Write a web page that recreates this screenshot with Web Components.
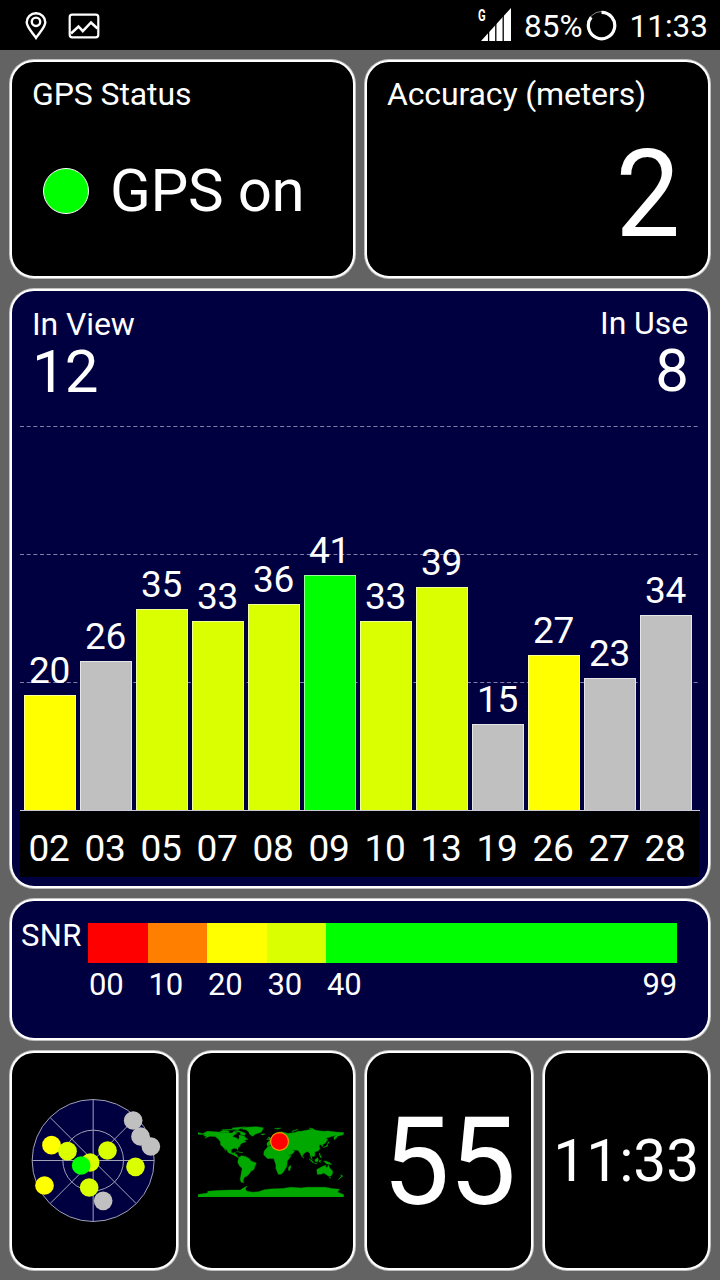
<!DOCTYPE html>
<html lang="en">
<head>
<meta charset="utf-8">
<title>GPS Test</title>
<style>
  html, body {
    margin: 0;
    background: #636363;
  }

  body {
    width: 720px;
    height: 1280px;
    overflow: hidden;
    color: #fff;
    font-family: Roboto, "Liberation Sans", sans-serif;
  }
</style>
</head>
<body>
<gps-app></gps-app>

<script>
const define = (name, html, setup) => {
  const template = document.createElement("template");
  template.innerHTML = html;

  customElements.define(name, class extends HTMLElement {
    constructor() {
      super();
      this.attachShadow({ mode: "open" }).append(template.content.cloneNode(true));
    }

    connectedCallback() {
      setup?.(this, this.shadowRoot);
    }
  });
};

const COLORS = {
  none: "#c0c0c0",
  yellow: "#ffff00",
  lime: "#d9ff00",
  green: "#00ff00",
};

const SATELLITES = [
  ["02", 20, "yellow"],
  ["03", 26, "none"],
  ["05", 35, "lime"],
  ["07", 33, "lime"],
  ["08", 36, "lime"],
  ["09", 41, "green"],
  ["10", 33, "lime"],
  ["13", 39, "lime"],
  ["19", 15, "none"],
  ["26", 27, "yellow"],
  ["27", 23, "none"],
  ["28", 34, "none"],
];

define("status-bar", `
  <style>
    :host {
      height: 50px;
      padding: 2px 12px 0 24px;
      box-sizing: border-box;
      display: flex;
      align-items: center;
      background: #000;
      font-size: 31.5px;
      line-height: 48px;
    }

    svg {
      display: block;
      fill: none;
      stroke: #fff;
    }

    .text {
      padding-top: 1px;
    }

    .pin {
      margin-right: 20px;
    }

    .signal {
      margin: 0 13px 4px auto;
      display: flex;
      align-items: flex-start;
    }

    .signal span {
      width: 8px;
      margin-right: -5px;
      font: bold 16px/16px Roboto, sans-serif;
      transform: scaleX(0.7);
      transform-origin: left;
    }

    .battery {
      margin: 0 13px 2px 3px;
    }
  </style>
  <svg class="pin" width="24" height="28" viewBox="0 0 24 28" stroke-width="2.4">
    <path d="M12 25.8C9 21 2.7 15.5 2.7 10.3a9.3 9 0 0 1 18.6 0C21.3 15.5 15 21 12 25.8Z"/>
    <circle cx="12" cy="9.8" r="4.2"/>
  </svg>
  <svg width="32" height="26" viewBox="0 0 32 26" stroke-width="2.2">
    <rect x="1.7" y="1.7" width="28.6" height="22.6" rx="2.5"/>
    <path d="M3 20.5L10.5 13.5L14.8 18.2L23 9.5L29.5 15.5" stroke-width="2.5"/>
  </svg>
  <div class="signal">
    <span>G</span>
    <svg width="30" height="33" viewBox="0 0 30 33">
      <path d="M0 33L30 0V33Z" fill="#fff" stroke="none"/>
      <path d="M7.6 0V33M14.8 0V33M22.2 0V33" stroke="#000" stroke-width="1.3"/>
    </svg>
  </div>
  <span class="text">85%</span>
  <svg class="battery" width="31" height="31" viewBox="0 0 31 31">
    <circle cx="15.5" cy="15.5" r="14" stroke="#888"/>
    <path d="M15.5 2.3A13.2 13.2 0 1 1 5.2 7.3" stroke-width="3.2"/>
  </svg>
  <span class="text">11:33</span>
`);

define("info-card", `
  <style>
    :host {
      display: flex;
      flex-direction: column;
      box-sizing: border-box;
      min-width: 0;
      border: 2px solid #fff;
      border-radius: 24px;
      background: #000;
      box-shadow: 0 0 0 1px rgba(255, 255, 255, 0.6);
    }

    :host([navy]) {
      background: #000040;
    }

    :host([center]) {
      align-items: center;
      justify-content: center;
    }
  </style>
  <slot></slot>
`);

define("gps-status", `
  <style>
    :host {
      display: block;
      padding: 12px 20px 0;
      font-size: 32px;
      line-height: 40px;
      letter-spacing: -0.1px;
    }

    .state {
      margin-top: 39px;
      padding-left: 11px;
      display: flex;
      align-items: center;
      gap: 21px;
      font-size: 60px;
      line-height: 76px;
      letter-spacing: -0.4px;
    }

    .state i {
      width: 44px;
      height: 44px;
      border: 1px solid #fff;
      border-radius: 50%;
      background: #0f0;
    }
  </style>
  <slot name="title"></slot>
  <div class="state"><i></i><slot></slot></div>
`);

define("gps-accuracy", `
  <style>
    :host {
      display: block;
      padding: 12px 28px 0 20px;
      font-size: 32px;
      line-height: 40px;
      letter-spacing: -0.14px;
    }

    .value {
      margin-top: 20px;
      font-size: 122.5px;
      line-height: 120px;
      text-align: right;
      transform: scaleX(0.94);
      transform-origin: right;
    }
  </style>
  <slot name="title"></slot>
  <div class="value"><slot></slot></div>
`);

define("sat-bar", `
  <style>
    :host {
      width: 52px;
      text-align: center;
      font-size: 37px;
      line-height: 44px;
    }

    .label {
      margin: 0 1px 2px 0;
      letter-spacing: -0.3px;
    }

    .bar {
      box-sizing: border-box;
      border: 1px solid rgba(255, 255, 255, 0.6);
      border-bottom: 0;
    }
  </style>
  <div class="label"></div>
  <div class="bar"></div>
`, (host, root) => {
  const bar = root.querySelector(".bar");
  root.querySelector(".label").textContent = host.getAttribute("snr");
  bar.style.height = Math.round(host.getAttribute("snr") * 5.73) + "px";
  bar.style.background = COLORS[host.getAttribute("color")];
});

define("sat-chart", `
  <style>
    :host {
      flex: 1;
      padding: 13px 8px 9px;
      display: flex;
      flex-direction: column;
      font-size: 32px;
      line-height: 40px;
      letter-spacing: -0.1px;
    }

    .counts {
      padding: 0 12px;
      display: flex;
      justify-content: space-between;
    }

    .counts div:last-child {
      margin-top: -1px;
      text-align: right;
    }

    .counts b {
      display: block;
      font-weight: normal;
      font-size: 60px;
      line-height: 56px;
      letter-spacing: -1px;
    }

    .plot {
      flex: 1;
      position: relative;
      padding: 0 4px;
      display: flex;
      align-items: flex-end;
      gap: 4px;
      border-bottom: 1px solid #c8c8d8;
    }

    .lines {
      position: absolute;
      left: 0;
      bottom: 0;
      stroke: #7e7eaa;
      stroke-dasharray: 4 2.67;
    }

    sat-bar {
      position: relative;
    }

    .ids {
      height: 66px;
      margin-right: 1px;
      padding: 0 5px 0 3px;
      display: flex;
      gap: 4px;
      background: #000;
      font-size: 37px;
      line-height: 76px;
      letter-spacing: -0.3px;
      text-align: center;
    }

    .ids span {
      width: 52px;
    }
  </style>
  <div class="counts">
    <div>In View<b>12</b></div>
    <div>In Use<b>8</b></div>
  </div>
  <div class="plot">
    <svg class="lines" width="678" height="386">
      <path d="M0 2.5H678M0 130.5H678M0 258.5H678"/>
    </svg>
  </div>
  <div class="ids"></div>
`, (host, root) => {
  const plot = root.querySelector(".plot");
  const ids = root.querySelector(".ids");

  SATELLITES.forEach(([id, snr, color]) => {
    const bar = document.createElement("sat-bar");
    bar.setAttribute("snr", snr);
    bar.setAttribute("color", color);
    plot.append(bar);

    const label = document.createElement("span");
    label.textContent = id;
    ids.append(label);
  });
});

define("snr-legend", `
  <style>
    :host {
      padding: 22px 31px 0 9px;
      display: flex;
      font-size: 31px;
      line-height: 44px;
    }

    .name {
      width: 67px;
      margin-top: -9px;
      letter-spacing: 0.4px;
    }

    .scale {
      flex: 1;
      display: grid;
      grid-template-columns: repeat(4, 59.5px) 1fr;
      grid-template-rows: 40px 44px;
    }

    .scale > span {
      padding-left: 1px;
      letter-spacing: -0.2px;
    }

    .end {
      display: flex;
      justify-content: space-between;
    }
  </style>
  <div class="name">SNR</div>
  <div class="scale">
    <i style="background: #ff0000"></i>
    <i style="background: #ff8000"></i>
    <i style="background: #ffff00"></i>
    <i style="background: #d9ff00"></i>
    <i style="background: #00ff00"></i>
    <span>00</span>
    <span>10</span>
    <span>20</span>
    <span>30</span>
    <span class="end"><span>40</span><span>99</span></span>
  </div>
`);

define("sky-radar", `
  <style>
    :host, svg {
      display: block;
    }
  </style>
  <svg width="140" height="140" viewBox="42.5 32.5 420 420">
    <g fill="#000040" stroke="#a0a0b8" stroke-width="3">
      <circle cx="250" cy="241" r="183"/>
      <circle cx="250" cy="241" r="91"/>
      <path d="M250 58V424M67 241H433M121 112L379 370M379 112L121 370"/>
    </g>
    <g fill="#c0c0c0">
      <circle cx="370" cy="121" r="28"/>
      <circle cx="392" cy="169" r="28"/>
      <circle cx="423" cy="199" r="28"/>
      <circle cx="280" cy="362" r="28"/>
    </g>
    <g fill="#ffff00">
      <circle cx="125" cy="195" r="28"/>
      <circle cx="104" cy="316" r="28"/>
    </g>
    <g fill="#d9ff00">
      <circle cx="173" cy="213" r="28"/>
      <circle cx="293" cy="211" r="28"/>
      <circle cx="377" cy="260" r="28"/>
      <circle cx="241" cy="247" r="28"/>
      <circle cx="238" cy="322" r="28"/>
    </g>
    <circle cx="214" cy="256" r="28" fill="#00ff00"/>
  </svg>
`);

/* Equirectangular outlines, x = longitude and y = -latitude */
define("world-map", `
  <style>
    :host, svg {
      display: block;
    }
  </style>
  <svg width="146" height="73" viewBox="-179 -90 360 180">
    <g fill="#00a800" stroke="#00a800" stroke-width="1">
      <path d="M-168 -66L-180 -69V-65L-170 -64L-161 -64L-165 -61L-157 -59L-162 -55L-150 -60L-137 -59L-130 -54L-124 -47L-123 -38L-117 -33L-110 -23L-114 -31L-107 -25L-105 -20L-92 -14L-85 -10L-79 -7L-77 -8L-82 -10L-83 -15L-88 -16L-87 -21L-91 -18L-97 -20L-97 -27L-90 -30L-83 -29L-80 -25L-81 -31L-76 -35L-74 -40L-70 -43L-60 -46L-66 -50L-56 -52L-60 -55L-65 -60L-72 -62L-78 -62L-77 -56L-80 -51L-83 -55L-94 -59L-86 -66L-82 -68L-90 -72L-95 -68L-110 -68L-128 -70L-156 -72Z"/>
      <path d="M-125 -72L-115 -74L-103 -73L-103 -69L-117 -69ZM-90 -73L-80 -74L-62 -67L-64 -62L-75 -65L-74 -69ZM-120 -76L-95 -77L-92 -75L-115 -75ZM-95 -80L-62 -83L-75 -79L-80 -76L-92 -77Z"/>
      <path d="M-73 -78L-60 -82L-35 -83.5L-18 -81L-20 -75L-23 -70L-38 -65L-44 -60L-51 -64L-54 -70L-60 -76ZM-24 -65L-16 -66L-14 -65L-19 -63ZM-84 -22L-75 -20L-68 -19L-75 -20.5Z"/>
      <path d="M-77 -8L-72 -12L-62 -10L-51 -4L-50 0L-44 3L-35 6L-39 15L-41 22L-48 26L-53 33L-58 38L-62 40L-65 42L-68 50L-66 55L-73 53L-75 46L-73 36L-70 19L-76 14L-81 5L-80 -2Z"/>
      <path d="M-9 -43V-37L-5 -36L0 -39L4 -43L9 -44L15 -38L18 -40L13 -45L20 -41L23 -37L27 -41H40L42 -46L55 -46L60 -35H36L35 -31L44 -13L51 -12L41 1L40 15L35 22L32 28L26 34L19 34L13 20L13 10L9 -1L8 -5L-8 -5L-17 -14L-16 -23L-6 -35L10 -37L11 -33L20 -31L36 -33V-37L26 -38L15 -50H0L-4 -48Z"/>
      <path d="M0 -49L8 -54L10 -57L13 -54L25 -58L29 -60L22 -61L25 -65L18 -61L16 -56L12 -59L6 -59L6 -63L15 -68L26 -71L42 -67L38 -64L45 -67L60 -69L68 -72L75 -72L85 -74L104 -77.5L114 -74L130 -72L142 -73L160 -70L180 -69V-65L177 -63L165 -60L162 -55L157 -51L156 -58L163 -62L150 -59L136 -55L141 -52L135 -43L128 -39L129 -35L126 -35L125 -39L118 -39L122 -36L119 -34L122 -30L118 -24L109 -21L109 -12L105 -9L100 -13L103 -2L98 -9L97 -17L92 -22L87 -21L80 -15L78 -8L73 -17L70 -22L67 -25L57 -26L50 -30L56 -26L59 -22L53 -16L44 -13L35 -29L30 -42Z"/>
      <path d="M-5 -50L1 -51L0 -54L-3 -58L-6 -58L-4 -54ZM-10 -52L-6 -55L-6 -52ZM10 -79L25 -80L18 -77ZM52 -71L57 -74L68 -77L57 -72ZM95 -80L105 -79L98 -78Z"/>
      <path d="M49 12L50 16L47 25L44 24L44 17ZM80 -9L82 -7L80 -6ZM95 -5L105 3L105 6L98 0ZM106 6L115 8L112 8ZM109 -2L116 -7L118 -1L115 4L110 2ZM120 0L125 -1L122 2L123 5L120 4ZM120 -18L122 -18L122 -14L126 -7L122 -8ZM131 1L138 2L147 6L150 10L143 9L138 8L133 4ZM130 -32L136 -35L140 -40L141 -36L135 -33ZM140 -42L145 -43L142 -46Z"/>
      <path d="M114 22L122 18L129 14L136 12L136 16L140 17L142 11L146 19L153 26L152 33L149 38L143 39L138 35L131 31L124 34L115 34ZM145 41L148 41L147 44ZM173 35L178 38L174 42L167 47L170 43L174 40Z"/>
      <path d="M-180 84L-155 80L-155 76L-130 74L-100 73L-75 73L-67 68L-58 63L-62 69L-60 75L-45 78L-30 77L-15 72L0 70L30 69L50 66L75 68L90 66L110 66L135 66L150 69L170 71L165 78L180 84V90H-180Z"/>
    </g>
    <circle cx="22" cy="-47" r="22" fill="#ff0000" stroke="#ff9000" stroke-width="3"/>
  </svg>
`);

define("big-value", `
  <style>
    :host {
      padding-top: 4px;
      font-size: 122.5px;
      line-height: 1;
      letter-spacing: -1px;
      white-space: nowrap;
      transform: scaleX(0.98);
    }

    :host([small]) {
      padding-top: 2px;
      font-size: 58.6px;
      letter-spacing: 0;
      transform: none;
    }
  </style>
  <slot></slot>
`);

define("gps-app", `
  <style>
    :host {
      display: flex;
      flex-direction: column;
      width: 720px;
      height: 1280px;
    }

    main {
      flex: 1;
      padding: 10px;
      display: grid;
      grid-template-columns: repeat(4, 1fr);
      grid-template-rows: 218px 599px 141px 219px;
      column-gap: 10px;
      row-gap: 11px;
    }

    .half {
      grid-column: span 2;
    }

    .full {
      grid-column: span 4;
    }
  </style>
  <status-bar></status-bar>
  <main>
    <info-card class="half">
      <gps-status><span slot="title">GPS Status</span>GPS on</gps-status>
    </info-card>
    <info-card class="half">
      <gps-accuracy><span slot="title">Accuracy (meters)</span>2</gps-accuracy>
    </info-card>
    <info-card class="full" navy><sat-chart></sat-chart></info-card>
    <info-card class="full" navy><snr-legend></snr-legend></info-card>
    <info-card center><sky-radar></sky-radar></info-card>
    <info-card center><world-map></world-map></info-card>
    <info-card center><big-value>55</big-value></info-card>
    <info-card center><big-value small>11:33</big-value></info-card>
  </main>
`);
</script>
</body>
</html>
